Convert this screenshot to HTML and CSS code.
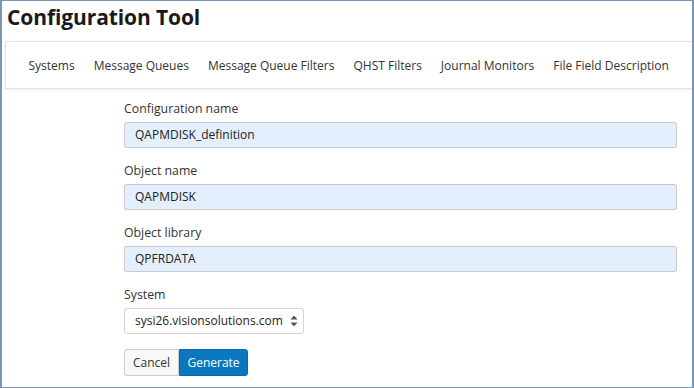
FILE: index.html
```html
<!DOCTYPE html>
<html>
<head>
    <title>Configuration Tool</title>
    <link rel="stylesheet" href="styles.css">
</head>
<body>
    <div class="frame">
        <h1 class="title">Configuration Tool</h1>

        <nav class="nav">
            <a class="nav-item">Systems</a>
            <a class="nav-item">Message Queues</a>
            <a class="nav-item">Message Queue Filters</a>
            <a class="nav-item">QHST Filters</a>
            <a class="nav-item">Journal Monitors</a>
            <a class="nav-item">File Field Description</a>
        </nav>

        <form class="form">
            <div class="field">
                <label class="label">Configuration name</label>
                <div class="input">QAPMDISK_definition</div>
            </div>
            <div class="field">
                <label class="label">Object name</label>
                <div class="input">QAPMDISK</div>
            </div>
            <div class="field">
                <label class="label">Object library</label>
                <div class="input">QPFRDATA</div>
            </div>
            <div class="field">
                <label class="label">System</label>
                <div class="select">
                    <span>sysi26.visionsolutions.com</span>
                    <svg class="caret" width="8" height="12" viewBox="0 0 8 12">
                        <path d="M4 0.5 L7.5 4.5 L0.5 4.5 Z M4 11.5 L7.5 7.5 L0.5 7.5 Z" fill="#555"/>
                    </svg>
                </div>
            </div>
            <div class="buttons">
                <button type="button" class="btn btn-cancel">Cancel</button>
                <button type="button" class="btn btn-primary">Generate</button>
            </div>
        </form>
    </div>
</body>
</html>
```

FILE: styles.css
```css
html, body {
    margin: 0;
    padding: 0;
    background: #fff;
}
.frame {
    width: 694px;
    height: 388px;
    box-sizing: border-box;
    border: 1px solid #7896b8;
    border-left-width: 2px;
    border-right-width: 2px;
    font-family: "Open Sans", "Noto Sans", sans-serif;
    font-size: 12px;
    color: #333;
    overflow: hidden;
}
.title {
    margin: 2px 0 0 5px;
    font-size: 21px;
    line-height: 28px;
    font-weight: bold;
    color: #1a1a1a;
    letter-spacing: -0.1px;
}
.nav {
    display: flex;
    align-items: center;
    height: 46px;
    margin: 10px 0 0 3px;
    padding-left: 13px;
    border: 1px solid #e2e2e2;
    border-right: none;
    box-shadow: 0 1px 2px rgba(0,0,0,0.08);
}
.nav-item {
    padding: 0 9.5px;
    color: #333;
    text-decoration: none;
}
.form {
    margin: 12px 0 0 122px;
    width: 553px;
}
.field {
    margin-bottom: 15px;
}
.label {
    display: block;
    font-size: 12.3px;
    line-height: 16px;
    margin-bottom: 5px;
}
.input, .select {
    box-sizing: border-box;
    height: 26px;
    line-height: 24px;
    padding: 0 10px;
    border: 1px solid #ccc;
    border-top-color: #c2c7cc;
    border-radius: 3px;
    background: #e3effc;
    color: #222;
}
.select {
    display: flex;
    align-items: center;
    justify-content: space-between;
    width: 180px;
    padding: 0 5px 0 10px;
    background: #fff;
    border-color: #d4d4d4;
}
.buttons {
    display: flex;
}
.btn {
    box-sizing: border-box;
    height: 27px;
    font-family: inherit;
    font-size: 12px;
    padding: 0;
    border: 1px solid #ccc;
    background: #f8f8f8;
    color: #333;
}
.btn-cancel {
    width: 55px;
    border-radius: 3px 0 0 3px;
}
.btn-primary {
    width: 69px;
    background: #0a78bf;
    border-color: #086aa9;
    color: #fff;
    border-radius: 0 3px 3px 0;
}
```
